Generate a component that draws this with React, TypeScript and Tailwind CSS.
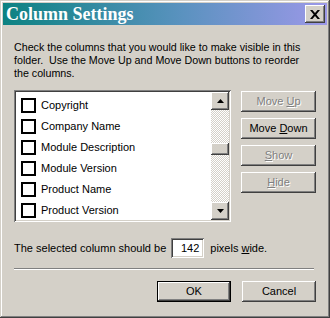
import React from "react";

const raised =
  "shadow-[inset_-1px_-1px_#404040,inset_1px_1px_#ffffff,inset_-2px_-2px_#808080,inset_2px_2px_#d4d0c8]";
const sunken =
  "shadow-[inset_1px_1px_#808080,inset_-1px_-1px_#ffffff,inset_2px_2px_#404040,inset_-2px_-2px_#d4d0c8]";
const disabledText = "text-[#808080] [text-shadow:1px_1px_0_#ffffff]";

function Btn({
  children,
  disabled,
  isDefault,
  w = "w-[75px]",
}: {
  children: React.ReactNode;
  disabled?: boolean;
  isDefault?: boolean;
  w?: string;
}) {
  if (isDefault) {
    return (
      <div className={`${w} h-[21px] border border-black flex`}>
        <div
          className={`flex-1 flex items-center justify-center bg-[#d4d0c8] ${raised} text-black`}
        >
          <span>{children}</span>
        </div>
      </div>
    );
  }
  return (
    <div
      className={`${w} h-[21px] flex items-center justify-center bg-[#d4d0c8] ${raised} ${
        disabled ? disabledText : "text-black"
      }`}
    >
      <span className="whitespace-pre">{children}</span>
    </div>
  );
}

const items = [
  "Copyright",
  "Company Name",
  "Module Description",
  "Module Version",
  "Product Name",
  "Product Version",
];

export default function App() {
  return (
    <div
      className={`w-[330px] h-[318px] bg-[#d4d0c8] p-[3px] flex flex-col font-['Liberation_Sans',Arial,sans-serif] text-[11px] leading-[13px] text-black shadow-[inset_-1px_-1px_#404040,inset_1px_1px_#d4d0c8,inset_-2px_-2px_#808080,inset_2px_2px_#ffffff]`}
    >
      {/* Title bar */}
      <div className="h-[22px] flex items-center justify-between bg-[linear-gradient(to_right,#0c8282,#5a92bf_55%,#9c98e8)] pl-[3px] pr-[2px]">
        <span className="font-['Liberation_Serif',serif] font-bold text-[18px] leading-[22px] text-white">
          Column Settings
        </span>
        <div
          className={`w-[20px] h-[18px] bg-[#d4d0c8] ${raised} flex items-center justify-center`}
        >
          <svg width="10" height="9" viewBox="0 0 10 9">
            <path
              d="M0 0h2.4L5 3 7.6 0H10L6.3 4.5 10 9H7.6L5 6 2.4 9H0L3.7 4.5z"
              fill="#000"
            />
          </svg>
        </div>
      </div>

      {/* Body */}
      <div className="flex-1 flex flex-col px-[11px] pt-[16px]">
        <p className="whitespace-pre text-[10.7px]">
          {"Check the columns that you would like to make visible in this\nfolder.  Use the Move Up and Move Down buttons to reorder\nthe columns."}
        </p>

        <div className="flex mt-[10px] gap-[10px]">
          {/* List box */}
          <div
            className={`w-[218px] h-[132px] bg-white ${sunken} p-[2px] flex`}
          >
            <div className="flex-1 overflow-hidden pt-[3px]">
              {items.map((it) => (
                <div key={it} className="h-[21px] flex items-center pl-[5px]">
                  <div className="w-[15px] h-[15px] border-2 border-black bg-white shrink-0" />
                  <span className="ml-[5px] text-[11px]">{it}</span>
                </div>
              ))}
            </div>
            {/* Scrollbar */}
            <div className="w-[18px] flex flex-col bg-[repeating-conic-gradient(#ffffff_0_25%,#d4d0c8_0_50%)] bg-[length:2px_2px]">
              <div
                className={`h-[18px] bg-[#d4d0c8] ${raised} flex items-center justify-center`}
              >
                <svg width="7" height="4" viewBox="0 0 7 4">
                  <path d="M3.5 0L7 4H0z" fill="#000" />
                </svg>
              </div>
              <div className="flex-1 flex flex-col pt-[33px]">
                <div className={`h-[12px] bg-[#d4d0c8] ${raised}`} />
              </div>
              <div
                className={`h-[18px] bg-[#d4d0c8] ${raised} flex items-center justify-center`}
              >
                <svg width="7" height="4" viewBox="0 0 7 4">
                  <path d="M0 0h7L3.5 4z" fill="#000" />
                </svg>
              </div>
            </div>
          </div>

          {/* Side buttons */}
          <div className="flex flex-col gap-[6px] pt-[1px]">
            <Btn disabled>
              {"Move "}
              <u>U</u>p
            </Btn>
            <Btn>
              {"Move "}
              <u>D</u>own
            </Btn>
            <Btn disabled>
              <u>S</u>how
            </Btn>
            <Btn disabled>
              <u>H</u>ide
            </Btn>
          </div>
        </div>

        <div className="flex items-center mt-[16px] h-[20px]">
          <span>The selected column should be</span>
          <div
            className={`ml-[5px] w-[33px] h-[20px] bg-white ${sunken} flex items-center justify-end pr-[5px]`}
          >
            142
          </div>
          <span className="ml-[6px]">
            pixels <u>w</u>ide.
          </span>
        </div>

        <div className="mt-[10px] w-[300px] h-[2px] border-t border-[#808080] border-b border-b-white" />

        <div className="flex justify-end gap-[11px] mt-[11px]">
          <Btn isDefault w="w-[74px]">
            OK
          </Btn>
          <Btn w="w-[74px]">Cancel</Btn>
        </div>
      </div>
    </div>
  );
}
